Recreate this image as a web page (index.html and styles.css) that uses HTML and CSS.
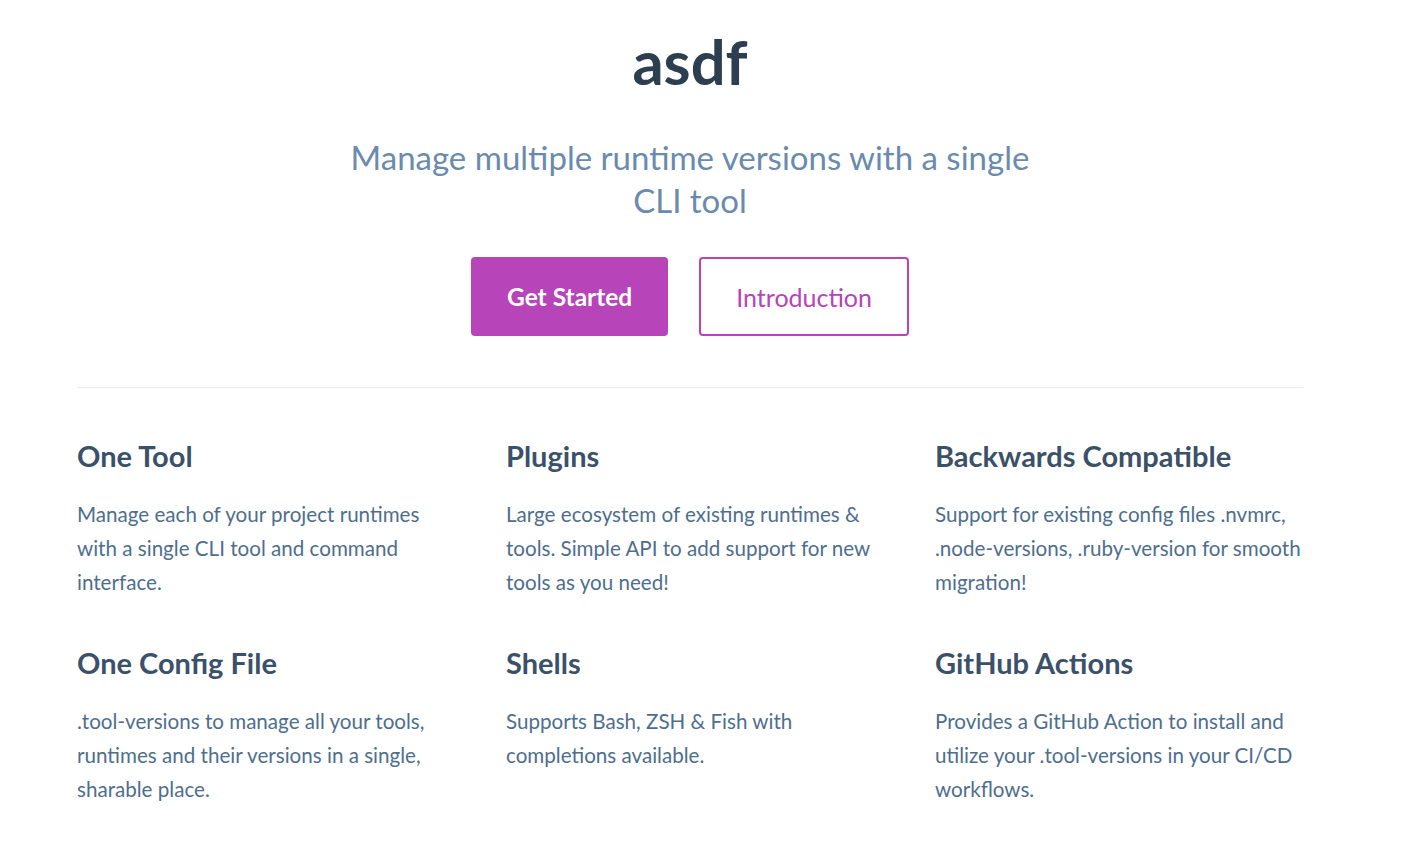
FILE: index.html
```html
<!DOCTYPE html>
<html lang="en">
<head>
  <meta charset="UTF-8" />
  <title>asdf</title>
  <link rel="stylesheet" href="styles.css">
</head>
<body>
  <main class="home">
    <header class="hero">
      <h1>asdf</h1>
      <p class="description">Manage multiple runtime versions with a single CLI tool</p>
      <div class="actions">
        <a class="action-button primary" href="#">Get Started</a>
        <a class="action-button outline" href="#">Introduction</a>
      </div>
    </header>

    <section class="features">
      <div class="feature">
        <h2>One Tool</h2>
        <p>Manage each of your project runtimes with a single CLI tool and command interface.</p>
      </div>
      <div class="feature">
        <h2>Plugins</h2>
        <p>Large ecosystem of existing runtimes &amp; tools. Simple API to add support for new tools as you need!</p>
      </div>
      <div class="feature">
        <h2>Backwards Compatible</h2>
        <p>Support for existing config files .nvmrc, .node-versions, .ruby-version for smooth migration!</p>
      </div>
      <div class="feature">
        <h2>One Config File</h2>
        <p>.tool-versions to manage all your tools, runtimes and their versions in a single, sharable place.</p>
      </div>
      <div class="feature">
        <h2>Shells</h2>
        <p>Supports Bash, ZSH &amp; Fish with completions available.</p>
      </div>
      <div class="feature">
        <h2>GitHub Actions</h2>
        <p>Provides a GitHub Action to install and utilize your .tool-versions in your CI/CD workflows.</p>
      </div>
    </section>
  </main>
</body>
</html>
```

FILE: styles.css
```css
* {
  margin: 0;
  padding: 0;
  box-sizing: border-box;
}

body {
  font-family: Lato, "Open Sans", sans-serif;
  color: #2c3e50;
  background: #fff;
  padding-right: 45px;
}

.home {
  max-width: 1226px;
  margin: 0 auto;
}

.hero {
  text-align: center;
  padding-top: 24px;
}

.hero h1 {
  font-size: 61.5px;
  line-height: 75px;
  font-weight: 700;
  color: #2c3e50;
}

.description {
  max-width: 720px;
  margin: 37px auto 0;
  font-size: 33px;
  line-height: 43px;
  color: #6a8bad;
}

.actions {
  display: flex;
  justify-content: center;
  gap: 31px;
  margin-top: 35px;
}

.action-button {
  display: inline-flex;
  align-items: center;
  height: 79px;
  padding: 0 35px;
  font-size: 25px;
  border-radius: 4px;
  text-decoration: none;
}

.primary {
  background-color: #b744b8;
  color: #fff;
  font-weight: 700;
  font-size: 24.5px;
  padding: 0 36px;
}

.outline {
  border: 2px solid #b744b8;
  color: #b744b8;
  background: #fff;
}

.features {
  margin-top: 51px;
  border-top: 1px solid #eaecef;
  padding-top: 50px;
  display: grid;
  grid-template-columns: repeat(3, 368px);
  justify-content: space-between;
  row-gap: 46px;
}

.feature h2 {
  font-size: 29px;
  line-height: 35px;
  font-weight: 700;
  color: #3a5169;
  margin-bottom: 24px;
}

.feature p {
  font-size: 20.6px;
  line-height: 34px;
  color: #4e6e8e;
}
```
